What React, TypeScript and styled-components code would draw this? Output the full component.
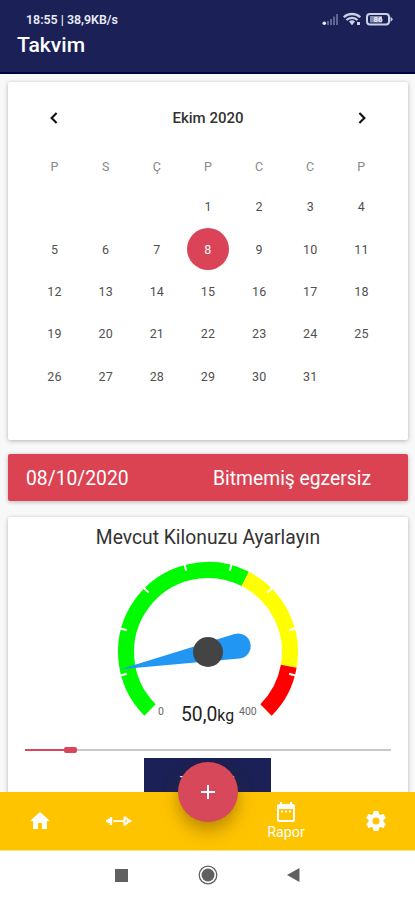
import React from "react";
import styled, { createGlobalStyle } from "styled-components";

const Global = createGlobalStyle`
  * { box-sizing: border-box; }
  html, body { margin: 0; padding: 0; }
  body { font-family: Roboto, "Liberation Sans", sans-serif; background: #fff; overflow: hidden; }
`;

const Screen = styled.div`
  width: 415px;
  height: 900px;
  overflow: hidden;
  display: flex;
  flex-direction: column;
  background: #fff;
`;

const Header = styled.header`
  flex: none;
  height: 74px;
  background: #1b2156;
  border-bottom: 2px solid #02023f;
  color: #fff;
`;

const StatusBar = styled.div`
  display: flex;
  align-items: center;
  justify-content: space-between;
  height: 27px;
  padding: 11px 22px 0 26px;
  font-size: 12.4px;
  font-weight: 600;
  color: #e9eaf5;
`;

const StatusIcons = styled.div`
  display: flex;
  align-items: center;
  svg { display: block; }
`;

const Title = styled.h1`
  margin: 4.5px 0 0 17px;
  font-size: 21.1px;
  line-height: 26px;
  font-weight: 500;
`;

const Content = styled.main`
  flex: none;
  height: 717.5px;
  overflow: hidden;
  padding: 8px 7px 0 8px;
  background: #f8f8f8;
  display: flex;
  flex-direction: column;
`;

const Card = styled.section<{ $height: number; $gap: number }>`
  flex: none;
  height: ${(p) => p.$height}px;
  margin-bottom: ${(p) => p.$gap}px;
  background: #fff;
  border-radius: 2px;
  box-shadow: 0 1px 4px rgba(0, 0, 0, 0.28);
`;

const MonthRow = styled.div`
  display: flex;
  align-items: center;
  justify-content: space-between;
  height: 24px;
  margin: 24px 34px 0;
  font-size: 15px;
  font-weight: 500;
  color: #333;
  svg { display: block; }
`;

const WeekGrid = styled.div<{ $head?: boolean }>`
  display: grid;
  grid-template-columns: repeat(7, 51.15px);
  grid-auto-rows: ${(p) => (p.$head ? 30 : 42.3)}px;
  justify-content: center;
  margin-top: ${(p) => (p.$head ? 21.5 : 4.3)}px;
`;

const Cell = styled.div<{ $muted?: boolean }>`
  display: flex;
  align-items: center;
  justify-content: center;
  font-size: 12.5px;
  letter-spacing: 0.2px;
  color: ${(p) => (p.$muted ? "#888" : "#505050")};
`;

const Selected = styled.span`
  display: flex;
  align-items: center;
  justify-content: center;
  width: 42px;
  height: 42px;
  border-radius: 50%;
  background: #db4358;
  color: #fff;
`;

const Banner = styled.section`
  flex: none;
  display: flex;
  justify-content: space-between;
  align-items: center;
  height: 47px;
  margin-bottom: 16px;
  padding: 2px 37px 0 18px;
  border-radius: 2px;
  background: #db4353;
  color: #fff;
  font-size: 19.3px;
  box-shadow: 0 1px 4px rgba(0, 0, 0, 0.28);
`;

const WeightTitle = styled.h2`
  margin: 0;
  padding-top: 8px;
  text-align: center;
  font-size: 19.3px;
  line-height: 26px;
  font-weight: 400;
  color: #333;
`;

const GaugeArea = styled.div`
  display: flex;
  justify-content: center;
  height: 155px;
  margin-top: 9px;
  svg { display: block; overflow: visible; }
`;

const Reading = styled.div`
  display: flex;
  justify-content: center;
  align-items: flex-start;
  height: 28px;
  margin-top: -13px;
`;

const Bound = styled.span<{ $width: number }>`
  width: ${(p) => p.$width}px;
  padding-top: 3px;
  font-size: 10.5px;
  line-height: 14px;
  color: #666;
`;

const Value = styled.span`
  width: 58px;
  font-size: 19.3px;
  line-height: 26px;
  white-space: nowrap;
  color: #222;
  small { font-size: 15.8px; }
`;

const Slider = styled.div`
  display: flex;
  align-items: center;
  height: 6px;
  margin: 17px 17px 0;
`;

const Track = styled.div<{ $active?: boolean }>`
  ${(p) => (p.$active ? "width: 39px;" : "flex: 1;")}
  height: ${(p) => (p.$active ? 2 : 1.5)}px;
  background: ${(p) => (p.$active ? "#d9475b" : "#c9c7c7")};
`;

const Thumb = styled.div`
  width: 13px;
  height: 6px;
  border-radius: 2px;
  background: #d64559;
`;

const SaveButton = styled.button`
  display: block;
  width: 127px;
  height: 47px;
  margin: 5px 0 0 136px;
  padding: 0;
  border: 0;
  background: #1b2156;
  color: #fff;
  font: 400 15.3px/44px Roboto, sans-serif;
`;

const BottomBar = styled.nav`
  flex: none;
  position: relative;
  height: 59px;
  background: #ffc400;
  border-bottom: 1px solid #ffe28a;
  display: grid;
  grid-template-columns: 79px 78px 102px 54px 102px;
  color: #fff;
`;

const Tab = styled.div<{ $shift?: number }>`
  display: flex;
  flex-direction: column;
  align-items: center;
  justify-content: center;
  padding-left: ${(p) => p.$shift ?? 0}px;
  font-size: 14.3px;
  line-height: 17px;
  svg { display: block; flex: none; }
`;

const AddButton = styled.button`
  position: absolute;
  left: 178px;
  top: -30px;
  width: 60px;
  height: 60px;
  padding: 0;
  border: 0;
  border-radius: 50%;
  display: flex;
  align-items: center;
  justify-content: center;
  background: #d8485b;
  box-shadow: 0 9px 18px rgba(80, 55, 0, 0.36), 0 2px 8px rgba(80, 55, 0, 0.08);
`;

const SystemNav = styled.footer`
  flex: 1;
  display: grid;
  grid-template-columns: 42px 130px 42px;
  align-items: center;
  justify-content: center;
  justify-items: center;
  background: #fff;
  svg { display: block; }
`;

const CX = 92;
const CY = 92;
const point = (radius: number, deg: number) => {
  const a = ((deg + 135) * Math.PI) / 180;
  return `${(CX + radius * Math.cos(a)).toFixed(2)} ${(CY + radius * Math.sin(a)).toFixed(2)}`;
};
const band = (from: number, to: number) =>
  `M${point(82, from)} A82 82 0 ${to - from > 180 ? 1 : 0} 1 ${point(82, to)}`;

const Gauge = () => (
  <svg width="184" height="184" viewBox="0 0 184 184">
    <g fill="none" strokeWidth="16">
      <path d={band(0, 162)} stroke="#00fb00" />
      <path d={band(162, 235)} stroke="#ffff00" />
      <path d={band(235, 270)} stroke="#ff0000" />
    </g>
    {[30, 60, 90, 120, 150, 180, 210, 240].map((deg) => (
      <path key={deg} d={`M${point(90.5, deg)} L${point(84, deg)}`} stroke="#fff" strokeWidth="2" />
    ))}
    <path d="M4.5 109.3 L118.5 74 A12.6 12.6 0 1 1 123.5 98.6 Z" fill="#2196f3" />
    <circle cx={CX} cy={CY} r="15" fill="#444" />
  </svg>
);

const Chevron = ({ right }: { right?: boolean }) => (
  <svg width="24" height="24" viewBox="0 0 24 24" fill="none" stroke="#111" strokeWidth="2.1">
    <path d={right ? "M9.4 7l5 5-5 5" : "M14.6 7l-5 5 5 5"} />
  </svg>
);

const days: (number | null)[] = [null, null, null, ...Array.from({ length: 31 }, (_, i) => i + 1)];

export default function App() {
  return (
    <Screen>
      <Global />
      <Header>
        <StatusBar>
          <span>18:55 | 38,9KB/s</span>
          <StatusIcons>
            <svg width="71" height="14" viewBox="0 0 71 14">
              <circle cx="2.3" cy="11.3" r="1.8" fill="#e6e8f5" />
              <path d="M6 13V9M9 13V7M12 13V4.5M15 13V2" stroke="#6c719c" strokeWidth="1.7" />
              <g fill="none" stroke="#cbd0e7" strokeWidth="2.3">
                <path d="M21.8 5.3C26 .9 34 .9 38.2 5.3" />
                <path d="M24.5 8.1C27 5 33 5 35.5 8.1" />
              </g>
              <path d="M27 9.5q3-2.5 6 0l-3 3.7zM35 10h3v3h-3z" fill="#cbd0e7" />
              <rect x="45" y="2" width="22" height="10.5" rx="3" fill="none" stroke="#cbd0e7" strokeWidth="2" />
              <path d="M68.5 4.5l2.5 2.7-2.5 2.7z" fill="#cbd0e7" />
              <rect x="48" y="4" width="12" height="6.5" fill="#858bad" />
              <text x="56" y="10.2" textAnchor="middle" fontSize="8" fontWeight="700" fill="#eef">86</text>
            </svg>
          </StatusIcons>
        </StatusBar>
        <Title>Takvim</Title>
      </Header>

      <Content>
        <Card $height={358} $gap={14}>
          <MonthRow>
            <Chevron />
            <span>Ekim 2020</span>
            <Chevron right />
          </MonthRow>
          <WeekGrid $head>
            {["P", "S", "Ç", "P", "C", "C", "P"].map((d, i) => (
              <Cell key={i} $muted>{d}</Cell>
            ))}
          </WeekGrid>
          <WeekGrid>
            {days.map((d, i) => (
              <Cell key={i}>{d === 8 ? <Selected>{d}</Selected> : d}</Cell>
            ))}
          </WeekGrid>
        </Card>

        <Banner>
          <span>08/10/2020</span>
          <span>Bitmemiş egzersiz</span>
        </Banner>

        <Card $height={330} $gap={0}>
          <WeightTitle>Mevcut Kilonuzu Ayarlayın</WeightTitle>
          <GaugeArea>
            <Gauge />
          </GaugeArea>
          <Reading>
            <Bound $width={23}>0</Bound>
            <Value>50,0<small>kg</small></Value>
            <Bound $width={19}>400</Bound>
          </Reading>
          <Slider>
            <Track $active />
            <Thumb />
            <Track />
          </Slider>
          <SaveButton>TAMAM</SaveButton>
        </Card>
      </Content>

      <BottomBar>
        <Tab>
          <svg width="24" height="24" viewBox="0 0 24 24" fill="#fff">
            <path d="M10 20v-6h4v6h5v-8h3L12 3 2 12h3v8z" />
          </svg>
        </Tab>
        <Tab>
          <svg width="27" height="12" viewBox="0 0 27 12" fill="#fff">
            <path d="M1 4.8h2v-1h1.7V2h2.5v8H4.7V8.2H3v-1H1zM8.4 5.2h10.2v1.7H8.4z" />
            <path d="M18.5 1.5h2.7v1.2h1.7v1.6H25v1h1.5v1.5H25v1h-2.1v1.5h-1.7v1.2h-2.7zM20.5 4.5v3h1.2v-3z" fillRule="evenodd" />
          </svg>
        </Tab>
        <span />
        <Tab>
          <svg width="24" height="24" viewBox="0 0 24 24" fill="#fff">
            <path fillRule="evenodd" d="M19 4h-1V2h-2v2H8V2H6v2H5c-1.1 0-2 .9-2 2v14c0 1.1.9 2 2 2h14c1.1 0 2-.9 2-2V6c0-1.1-.9-2-2-2zm0 16H5V9h14zM7 10.5h2v2H7zm4 0h2v2h-2zm4 0h2v2h-2z" />
          </svg>
          Rapor
        </Tab>
        <Tab $shift={24}>
          <svg width="24" height="24" viewBox="0 0 24 24" fill="#fff">
            <path d="M19.43 12.98c.04-.32.07-.64.07-.98s-.03-.66-.07-.98l2.11-1.65c.19-.15.24-.42.12-.64l-2-3.46c-.12-.22-.39-.3-.61-.22l-2.49 1c-.52-.4-1.08-.73-1.69-.98l-.38-2.65C14.46 2.18 14.25 2 14 2h-4c-.25 0-.46.18-.49.42l-.38 2.65c-.61.25-1.17.59-1.69.98l-2.49-1c-.23-.09-.49 0-.61.22l-2 3.46c-.13.22-.07.49.12.64l2.11 1.65c-.04.32-.07.65-.07.98s.03.66.07.98l-2.11 1.65c-.19.15-.24.42-.12.64l2 3.46c.12.22.39.3.61.22l2.49-1c.52.4 1.08.73 1.69.98l.38 2.65c.03.24.24.42.49.42h4c.25 0 .46-.18.49-.42l.38-2.65c.61-.25 1.17-.59 1.69-.98l2.49 1c.23.09.49 0 .61-.22l2-3.46c.12-.22.07-.49-.12-.64zM12 15.5A3.5 3.5 0 1 1 12 8.5a3.5 3.5 0 0 1 0 7z" />
          </svg>
        </Tab>
        <AddButton aria-label="Ekle">
          <svg width="16" height="16" viewBox="0 0 16 16" stroke="#fff" strokeWidth="2">
            <path d="M8 1v14M1 8h14" />
          </svg>
        </AddButton>
      </BottomBar>

      <SystemNav>
        <svg width="13" height="13"><rect width="13" height="13" fill="#606060" /></svg>
        <svg width="20" height="20" viewBox="0 0 20 20">
          <circle cx="10" cy="10" r="8.8" fill="none" stroke="#606060" strokeWidth="1.3" />
          <circle cx="10" cy="10" r="6.5" fill="#606060" />
        </svg>
        <svg width="13" height="14"><path d="M0 7L12.5 0v14z" fill="#606060" /></svg>
      </SystemNav>
    </Screen>
  );
}
